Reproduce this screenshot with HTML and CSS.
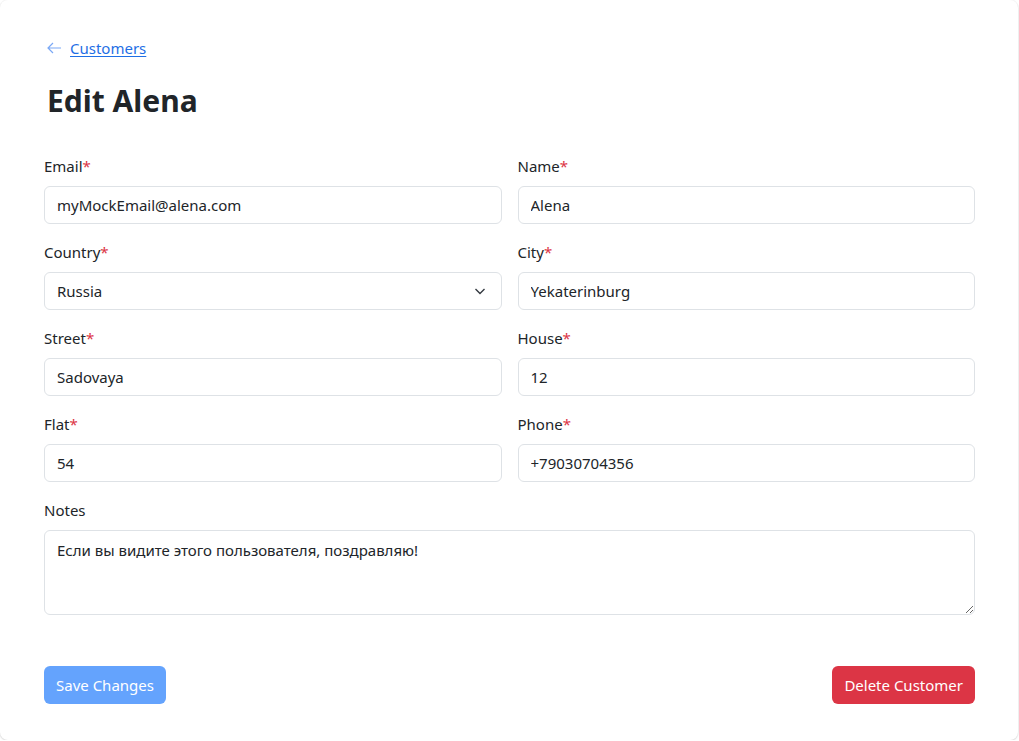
FILE: index.html
```html
<!DOCTYPE html>
<html lang="en">
<head>
<meta charset="utf-8">
<title>Edit Alena</title>
<link rel="stylesheet" href="styles.css">
</head>
<body>
<div class="card">
  <a class="back" href="#"><svg class="back-icon" width="16" height="16" viewBox="0 0 16 16"><path d="M15 8H2M7 3L2 8l5 5" fill="none" stroke="currentColor" stroke-width="1.2"/></svg><span class="back-text">Customers</span></a>
  <h1 class="title">Edit Alena</h1>
  <form class="form">
    <div class="field">
      <label class="label">Email<span class="req">*</span></label>
      <input class="input" type="text" value="myMockEmail@alena.com">
    </div>
    <div class="field">
      <label class="label">Name<span class="req">*</span></label>
      <input class="input" type="text" value="Alena">
    </div>
    <div class="field">
      <label class="label">Country<span class="req">*</span></label>
      <div class="select">
        <span>Russia</span>
        <svg class="chev" width="12" height="12" viewBox="0 0 12 12"><path d="M1.5 4l4.5 4.5L10.5 4" fill="none" stroke="#343a40" stroke-width="1.4"/></svg>
      </div>
    </div>
    <div class="field">
      <label class="label">City<span class="req">*</span></label>
      <input class="input" type="text" value="Yekaterinburg">
    </div>
    <div class="field">
      <label class="label">Street<span class="req">*</span></label>
      <input class="input" type="text" value="Sadovaya">
    </div>
    <div class="field">
      <label class="label">House<span class="req">*</span></label>
      <input class="input" type="text" value="12">
    </div>
    <div class="field">
      <label class="label">Flat<span class="req">*</span></label>
      <input class="input" type="text" value="54">
    </div>
    <div class="field">
      <label class="label">Phone<span class="req">*</span></label>
      <input class="input" type="text" value="+79030704356">
    </div>
    <div class="field full">
      <label class="label">Notes</label>
      <textarea class="textarea">Если вы видите этого пользователя, поздравляю!</textarea>
    </div>
  </form>
  <div class="actions">
    <button class="btn btn-save" type="button">Save Changes</button>
    <button class="btn btn-delete" type="button">Delete Customer</button>
  </div>
</div>
</body>
</html>
```
FILE: styles.css
```css
* { box-sizing: border-box; }
html, body { margin: 0; background: #ffffff; }
body {
  font-family: "Noto Sans", "Open Sans", sans-serif;
  font-size: 15px;
  color: #212529;
}
.card {
  width: 1018px;
  height: 740px;
  border-radius: 8px;
  background: #fff;
  box-shadow: 0 0 0 1px rgba(0, 0, 0, 0.03), 0 1px 2px rgba(0, 0, 0, 0.12);
  padding: 36px 43px 36px 44px;
  display: flex;
  flex-direction: column;
}
.back {
  display: flex;
  align-items: center;
  gap: 8px;
  height: 24px;
  color: #1f6fe5;
  text-decoration: none;
  align-self: flex-start;
  margin-left: 2px;
}
.back-icon { color: #7aa8f5; }
.back-text { text-decoration: underline; text-underline-offset: 2px; }
.title {
  margin: 23px 0 36px 3px;
  font-size: 30px;
  line-height: 36px;
  font-weight: 700;
  color: #212529;
}
.form {
  display: grid;
  grid-template-columns: 1fr 1fr;
  column-gap: 16px;
  row-gap: 17px;
}
.field { display: flex; flex-direction: column; }
.full { grid-column: 1 / -1; }
.label {
  line-height: 22px;
  margin-bottom: 9px;
}
.req { color: #dc3545; }
.input, .select, .textarea {
  font-family: inherit;
  font-size: 15px;
  color: #212529;
  border: 1px solid #dee2e6;
  border-radius: 6px;
  background: #fff;
}
.input {
  height: 38px;
  padding: 0 12px;
  width: 100%;
}
.select {
  height: 38px;
  padding: 0 15px 0 12px;
  display: flex;
  align-items: center;
  justify-content: space-between;
}
.textarea {
  height: 85px;
  padding: 8px 12px;
  resize: vertical;
  width: 100%;
  line-height: 22px;
}
.actions {
  margin-top: 51px;
  display: flex;
  justify-content: space-between;
}
.btn {
  height: 38px;
  padding: 0 12px;
  border: none;
  border-radius: 6px;
  color: #fff;
  font-family: inherit;
  font-size: 15px;
}
.btn-save { background: #64a3fd; }
.btn-delete { background: #dc3545; }
```
